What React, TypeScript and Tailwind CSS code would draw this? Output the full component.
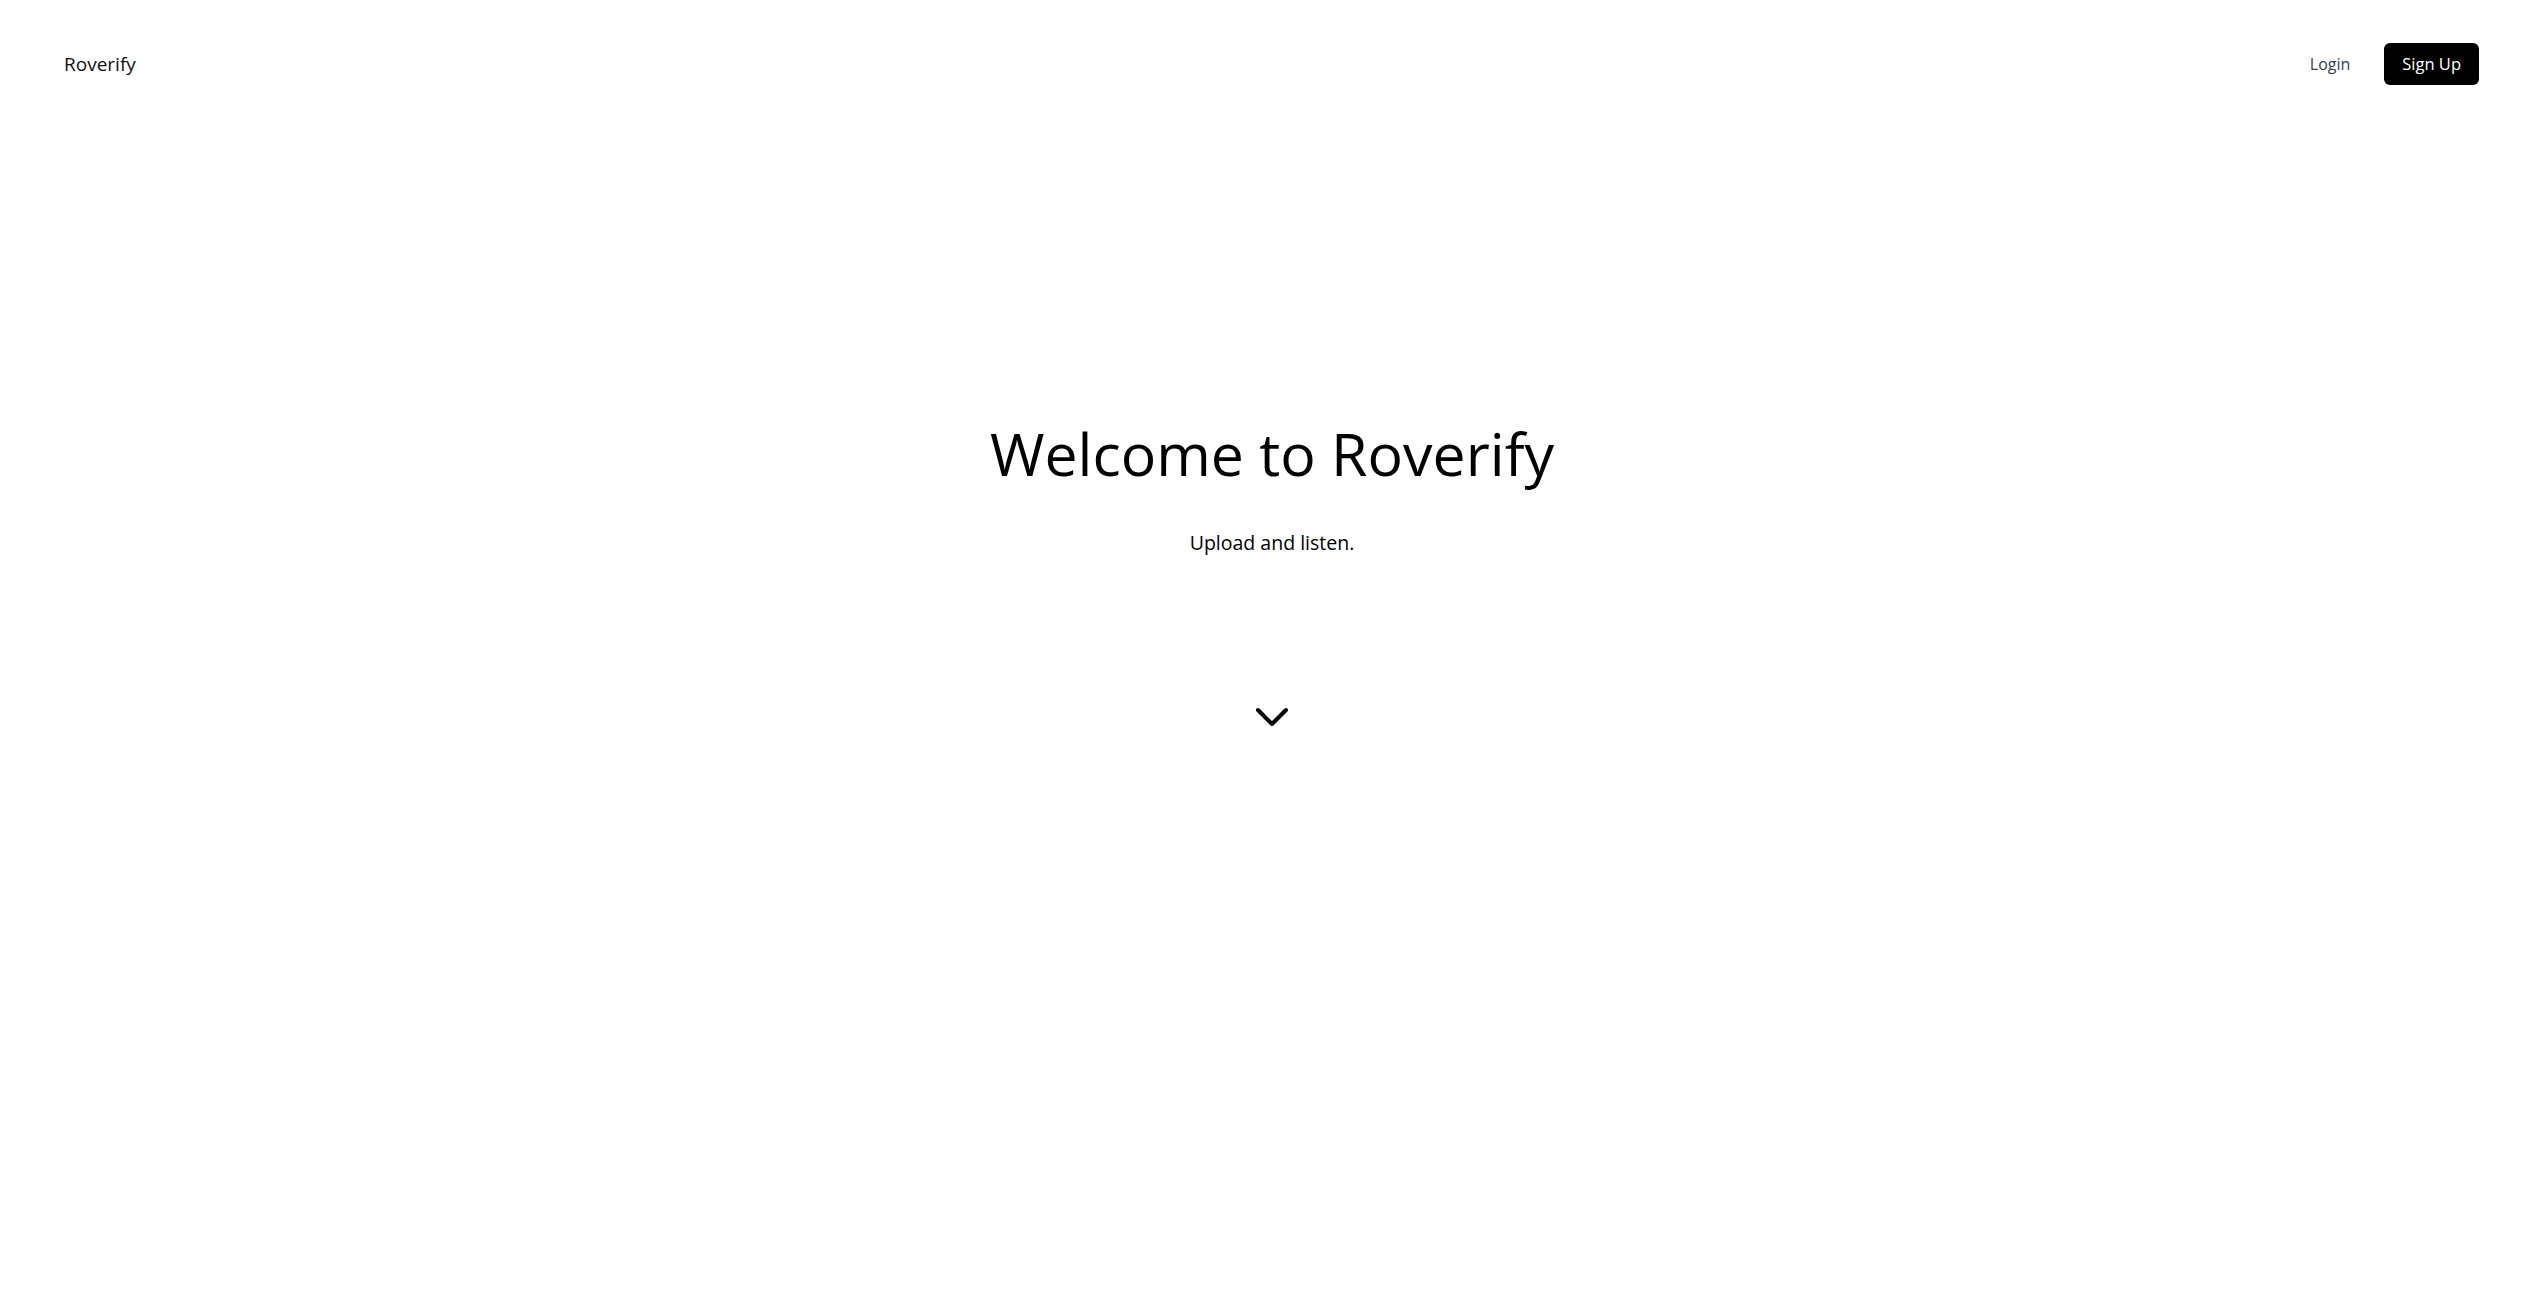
import React from "react";

export default function App() {
  return (
    <div
      className="min-h-screen w-full bg-white text-black"
      style={{ fontFamily: '"Open Sans", "Noto Sans", sans-serif' }}
    >
      <header className="flex h-[128px] items-center justify-between pl-[64px] pr-[58px]">
        <div className="text-[19px] font-medium leading-none text-[#111]">Roverify</div>
        <nav className="flex items-center gap-[34px]">
          <button className="text-[16px] text-gray-700">Login</button>
          <button className="h-[42px] rounded-[6px] bg-black px-[18px] text-[16.5px] text-white">
            Sign Up
          </button>
        </nav>
      </header>
      <main className="flex flex-col items-center pl-[7px]">
        <h1 className="mt-[295px] text-[59px] leading-[60px] font-normal">
          Welcome to Roverify
        </h1>
        <p className="mt-[46px] text-[19.5px] leading-[28px]">Upload and listen.</p>
        <svg
          className="mt-[149px]"
          width="40"
          height="24"
          viewBox="0 0 40 24"
          fill="none"
          stroke="black"
          strokeWidth="4"
          strokeLinecap="round"
          strokeLinejoin="round"
        >
          <path d="M6 4 L20 18 L34 4" />
        </svg>
      </main>
    </div>
  );
}
